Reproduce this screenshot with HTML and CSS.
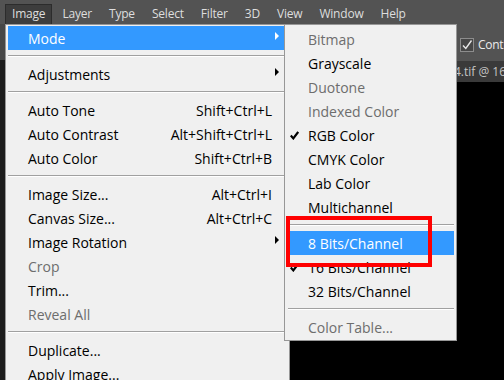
FILE: index.html
```html
<!DOCTYPE html>
<html lang="en">
<head>
    <meta charset="UTF-8">
    <meta name="viewport" content="width=device-width, initial-scale=1.0">
    <title>Image &gt; Mode</title>
    <link rel="stylesheet" href="styles.css">
</head>
<body>
    <nav class="menubar">
        <div class="menubar-item open">Image</div>
        <div class="menubar-item">Layer</div>
        <div class="menubar-item">Type</div>
        <div class="menubar-item">Select</div>
        <div class="menubar-item">Filter</div>
        <div class="menubar-item">3D</div>
        <div class="menubar-item">View</div>
        <div class="menubar-item">Window</div>
        <div class="menubar-item">Help</div>
    </nav>

    <div class="workspace">
        <div class="tool-strip">
            <div class="tool-strip-top"></div>
        </div>

        <div class="doc-area">
            <div class="options-bar">
                <span class="checkbox">
                    <svg width="12" height="12" viewBox="0 0 12 12"><path d="M2 6.5 L4.8 9.5 L10.5 1.5" fill="none" stroke="#e8e8e8" stroke-width="1.4"/></svg>
                </span>
                <span>Contiguous</span>
            </div>
            <div class="doc-tabs">
                <span class="doc-tab">4.tif @ 16.7% (RGB/16)</span>
            </div>
            <div class="canvas"></div>
        </div>

        <!-- Image menu -->
        <div class="menu menu-main">
            <div class="menu-item active"><span class="mark"></span><span class="label">Mode</span><span class="arrow"></span></div>
            <div class="separator"></div>
            <div class="menu-item"><span class="mark"></span><span class="label">Adjustments</span><span class="arrow"></span></div>
            <div class="separator"></div>
            <div class="menu-item"><span class="mark"></span><span class="label">Auto Tone</span><span class="shortcut">Shift+Ctrl+L</span></div>
            <div class="menu-item"><span class="mark"></span><span class="label">Auto Contrast</span><span class="shortcut">Alt+Shift+Ctrl+L</span></div>
            <div class="menu-item"><span class="mark"></span><span class="label">Auto Color</span><span class="shortcut">Shift+Ctrl+B</span></div>
            <div class="separator"></div>
            <div class="menu-item"><span class="mark"></span><span class="label">Image Size...</span><span class="shortcut">Alt+Ctrl+I</span></div>
            <div class="menu-item"><span class="mark"></span><span class="label">Canvas Size...</span><span class="shortcut">Alt+Ctrl+C</span></div>
            <div class="menu-item"><span class="mark"></span><span class="label">Image Rotation</span><span class="arrow"></span></div>
            <div class="menu-item disabled"><span class="mark"></span><span class="label">Crop</span></div>
            <div class="menu-item"><span class="mark"></span><span class="label">Trim...</span></div>
            <div class="menu-item disabled"><span class="mark"></span><span class="label">Reveal All</span></div>
            <div class="separator"></div>
            <div class="menu-item"><span class="mark"></span><span class="label">Duplicate...</span></div>
            <div class="menu-item"><span class="mark"></span><span class="label">Apply Image...</span></div>
        </div>

        <!-- Mode submenu -->
        <div class="menu menu-sub">
            <div class="menu-item disabled"><span class="mark"></span><span class="label">Bitmap</span></div>
            <div class="menu-item"><span class="mark"></span><span class="label">Grayscale</span></div>
            <div class="menu-item disabled"><span class="mark"></span><span class="label">Duotone</span></div>
            <div class="menu-item disabled"><span class="mark"></span><span class="label">Indexed Color</span></div>
            <div class="menu-item">
                <span class="mark"><svg width="9" height="9" viewBox="0 0 9 9"><path d="M0.8 4.6 L3.3 7.4 L8.2 1" fill="none" stroke="#000" stroke-width="2.2"/></svg></span>
                <span class="label">RGB Color</span>
            </div>
            <div class="menu-item"><span class="mark"></span><span class="label">CMYK Color</span></div>
            <div class="menu-item"><span class="mark"></span><span class="label">Lab Color</span></div>
            <div class="menu-item"><span class="mark"></span><span class="label">Multichannel</span></div>
            <div class="separator"></div>
            <div class="menu-item active"><span class="mark"></span><span class="label">8 Bits/Channel</span></div>
            <div class="menu-item">
                <span class="mark"><svg width="9" height="9" viewBox="0 0 9 9"><path d="M0.8 4.6 L3.3 7.4 L8.2 1" fill="none" stroke="#000" stroke-width="2.2"/></svg></span>
                <span class="label">16 Bits/Channel</span>
            </div>
            <div class="menu-item"><span class="mark"></span><span class="label">32 Bits/Channel</span></div>
            <div class="separator"></div>
            <div class="menu-item disabled"><span class="mark"></span><span class="label">Color Table...</span></div>
        </div>

        <div class="callout"></div>
    </div>
</body>
</html>
```

FILE: styles.css
```css
/* Reset */
* {
    margin: 0;
    padding: 0;
    box-sizing: border-box;
}

body {
    width: 504px;
    height: 380px;
    overflow: hidden;
    background-color: #000;
    font-family: "Open Sans", sans-serif;
}

/* Application menu bar */
.menubar {
    display: flex;
    gap: 3px;
    height: 24px;
    padding: 4px 0 0 5px;
    background-color: #535353;
    color: #dedede;
    font-size: 12px;
    letter-spacing: -0.2px;
}

.menubar-item {
    height: 20px;
    line-height: 18px;
    padding: 0 6px;
    border: 1px solid transparent;
    border-bottom: none;
}

.menubar-item.open {
    background-color: #3d3d3d;
    border-color: #2c2c2c;
}

/* Workspace behind the menus */
.workspace {
    position: relative;
    display: flex;
    height: 356px;
    overflow: hidden;
}

.tool-strip {
    flex: none;
    width: 8px;
    background-color: #1c1c1c;
}

.tool-strip-top {
    height: 36px;
    background-color: #474747;
}

.doc-area {
    flex: 1;
    min-width: 0;
    display: flex;
    flex-direction: column;
    overflow: hidden;
}

.options-bar {
    display: flex;
    align-items: center;
    gap: 4px;
    height: 37px;
    padding: 4px 0 0 452px;
    background-color: #535353;
    color: #ececec;
    font-size: 12px;
    letter-spacing: -0.3px;
    white-space: nowrap;
}

.checkbox {
    display: flex;
    align-items: center;
    justify-content: center;
    width: 14px;
    height: 14px;
    flex: none;
    border: 1px solid #8c8c8c;
    background-color: #474747;
}

.doc-tabs {
    display: flex;
    height: 21px;
    padding-left: 446px;
    background-color: #3a3a3a;
}

.doc-tab {
    line-height: 21px;
    font-size: 12px;
    color: #c4c4c4;
    white-space: nowrap;
}

.canvas {
    flex: 1;
    background-color: #000;
}

/* Drop-down menus */
.menu {
    position: absolute;
    top: 0;
    background-color: #f0f0f0;
    border: 1px solid #979797;
    color: #000;
    font-size: 14px;
}

.menu-main {
    left: 5px;
    width: 285px;
    height: 370px;
    padding: 1px 2px;
}

.menu-sub {
    left: 284px;
    width: 173px;
    padding: 2px 2px 1px 3px;
}

.menu-item {
    display: flex;
    align-items: center;
    height: 24px;
    white-space: nowrap;
}

.menu-item.active {
    background-color: #3399ff;
    color: #fff;
}

.menu-item.disabled {
    color: #6d6d6d;
}

.mark {
    display: flex;
    align-items: center;
    flex: none;
    width: 20px;
    padding-left: 2px;
}

.label {
    flex: 1;
}

.shortcut {
    padding-right: 15px;
}

.arrow {
    width: 0;
    height: 0;
    margin: 0 8px 4px 0;
    border-top: 4px solid transparent;
    border-bottom: 4px solid transparent;
    border-left: 4px solid #000;
}

.menu-item.active .arrow {
    border-left-color: #fff;
}

.separator {
    margin: 5px 0;
    border-top: 1px solid #a0a0a0;
    border-bottom: 1px solid #fff;
}

/* Red annotation box */
.callout {
    position: absolute;
    left: 286px;
    top: 192px;
    width: 146px;
    height: 51px;
    border: 4px solid #f00;
}
```
